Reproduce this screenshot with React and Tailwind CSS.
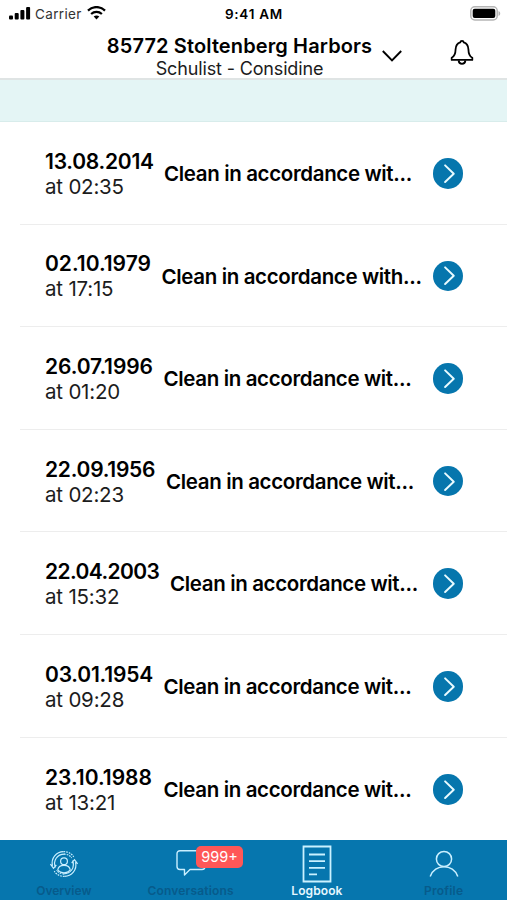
const entries = [
  { date: "13.08.2014", time: "at 02:35", title: "Clean in accordance wit...", col: "w-[119px]", dateTracking: "tracking-[-0.25px]" },
  { date: "02.10.1979", time: "at 17:15", title: "Clean in accordance with...", col: "w-[116.5px]", dateTracking: "tracking-[0px]" },
  { date: "26.07.1996", time: "at 01:20", title: "Clean in accordance wit...", col: "w-[118.5px]", dateTracking: "tracking-[-0.1px]" },
  { date: "22.09.1956", time: "at 02:23", title: "Clean in accordance wit...", col: "w-[121px]", dateTracking: "tracking-[-0.25px]" },
  { date: "22.04.2003", time: "at 15:32", title: "Clean in accordance wit...", col: "w-[125px]", dateTracking: "tracking-[-0.6px]" },
  { date: "03.01.1954", time: "at 09:28", title: "Clean in accordance wit...", col: "w-[118.5px]", dateTracking: "tracking-[-0.2px]" },
  { date: "23.10.1988", time: "at 13:21", title: "Clean in accordance wit...", col: "w-[118.5px]", dateTracking: "tracking-[0px]" },
];

function StatusBar() {
  return (
    <div className="grid h-[28px] grid-cols-3 items-center pl-[9px] pr-[6px]">
      <div className="flex items-center">
        <svg width="22" height="13" viewBox="0 0 22 13" className="-mt-px">
          <rect x="0" y="8.5" width="4" height="4" rx="1" />
          <rect x="5.7" y="6" width="4" height="6.5" rx="1" />
          <rect x="11.4" y="3" width="4" height="9.5" rx="1" />
          <rect x="17.1" y="0" width="4" height="12.5" rx="1" />
        </svg>
        <span className="ml-[4px] w-[47px] text-[13.5px] tracking-[0.35px] text-[#333]">Carrier</span>
        <svg width="19" height="14" viewBox="0 0 19 14" fill="none" stroke="#000" className="ml-[5px] -mt-[2px]">
          <path d="M1 4.6C5.8-.1 13.2-.1 18 4.6" strokeWidth="2.3" />
          <path d="M4.1 8C7.2 5.1 11.8 5.1 14.9 8" strokeWidth="2.2" />
          <path d="M6.7 10.6C8.3 9.2 10.7 9.2 12.3 10.6L9.5 13.5Z" fill="#000" stroke="none" />
        </svg>
      </div>
      <div className="whitespace-nowrap pr-[2px] text-center text-[13.5px] font-semibold tracking-[0.75px]">9:41 AM</div>
      <div className="-mt-[2px] flex justify-end">
        <svg width="31" height="15" viewBox="0 0 31 15">
          <rect x="0.8" y="0.8" width="26.4" height="13.2" rx="4" fill="#fff" stroke="#b5b5b5" strokeWidth="1.5" />
          <rect x="2.7" y="2.7" width="22.6" height="9.4" rx="2" />
          <path d="M28.5 5v5c2.3-.8 2.3-4.2 0-5Z" fill="#b5b5b5" />
        </svg>
      </div>
    </div>
  );
}

function Header() {
  return (
    <header className="flex h-[50px] items-start">
      <div className="ml-[106px] flex w-[267px] flex-col items-center whitespace-nowrap pt-[6px]">
        <div className="text-[20px] font-semibold leading-[24px] tracking-[0.12px]">85772 Stoltenberg Harbors</div>
        <div className="text-[18px] leading-[22px] tracking-[-0.15px] text-[#1c1c1c]">Schulist - Considine</div>
      </div>
      <svg width="22" height="14" viewBox="0 0 22 14" fill="none" stroke="#000" strokeWidth="1.9" className="ml-[8px] mt-[21px]">
        <path d="m1.8 2 9.2 9.3L20.2 2" />
      </svg>
      <svg width="26" height="28" viewBox="0 0 26 28" fill="none" stroke="#000" strokeWidth="1.8" strokeLinejoin="round" className="ml-[46px] mt-[11px]">
        <path d="M11.3 3.3C11.5 1.5 14.5 1.5 14.7 3.3C18 4.3 19.3 7 19.4 10.3C19.5 15 20.3 17.3 23.3 18.8V20.9H2.7V18.8C5.7 17.3 6.5 15 6.6 10.3C6.7 7 8 4.3 11.3 3.3Z" />
        <path d="M9.6 21.3C10 26 16 26 16.4 21.3" />
      </svg>
    </header>
  );
}

function Entry({ date, time, title, col, dateTracking }) {
  return (
    <li className="ml-[20px] flex h-[102.6px] items-center border-b border-[#ededed] pl-[25px] last:border-b-0">
      <div className={"shrink-0 whitespace-nowrap pt-[2px] leading-[25px] " + col}>
        <div className={"text-[21px] font-semibold " + dateTracking}>{date}</div>
        <div className="text-[20.5px] tracking-[-0.2px] text-[#1c1c1c]">{time}</div>
      </div>
      <div className="flex-1 whitespace-nowrap pt-[3px] text-[20.5px] font-semibold tracking-[-0.35px]">{title}</div>
      <div className="mr-[44px] mt-px flex size-[30.5px] shrink-0 items-center justify-center rounded-full bg-[#0676ad]">
        <svg width="31" height="31" viewBox="0 0 31 31" fill="none" stroke="#e9fbff" strokeWidth="2" strokeLinecap="round" strokeLinejoin="round">
          <path d="m12.3 7.2 8.8 8.5-8.8 8.4" />
        </svg>
      </div>
    </li>
  );
}

function OverviewIcon() {
  return (
    <svg width="30" height="28" viewBox="0 0 30 28" fill="none" stroke="#c9efff" strokeWidth="1.2">
      <circle cx="15" cy="11.2" r="3.4" />
      <path d="M8.7 20.2C9.5 13.7 20.5 13.7 21.3 20.2M8.7 20.2C12 23.6 18 23.6 21.3 20.2" />
      <path d="M6.4 17.5C3.8 10.5 8 4.3 15.5 4.2M3.5 15.8C1.6 8 7.5 1.8 14.5 1.7M1.4 14.2l3.1 4.1 2.8-3.3" />
      <path d="M23.6 10.5C26.2 17.5 22 23.7 14.5 23.8M26.5 12.2C28.4 20 22.5 26.2 15.5 26.3M28.6 13.8l-3.1-4.1-2.8 3.3" />
      <path d="M14.5 1.7C19 1.5 22.5 3.6 24.7 6.8M15.5 26.3C11 26.5 7.5 24.4 5.3 21.2M15 4.2C18 4 21 5.5 22.6 8M15 23.8C12 24 9.2 22.5 7.6 20.2" strokeDasharray="1.7 1" />
    </svg>
  );
}

function TabBar() {
  return (
    <nav className="grid h-[60px] shrink-0 grid-cols-4 bg-[#0676ae] text-center text-[12px] font-semibold text-[#075b8b]">
      <div className="flex flex-col items-center pl-px">
        <div className="flex h-[43px] items-center pt-[4px]"><OverviewIcon /></div>
        <span className="leading-[16px]">Overview</span>
      </div>
      <div className="relative flex flex-col items-center pl-px">
        <div className="flex h-[43px] items-center pt-[3px]">
          <svg width="30" height="28" viewBox="0 0 30 28" fill="none" stroke="#c9efff" strokeWidth="1.4" strokeLinejoin="round">
            <path d="M4 1.7H26a3 3 0 0 1 3 3V17.5a3 3 0 0 1-3 3H14L8.5 26V20.5H4a3 3 0 0 1-3-3V4.7a3 3 0 0 1 3-3Z" />
          </svg>
        </div>
        <span className="leading-[16px] tracking-[0.18px]">Conversations</span>
        <span className="absolute left-[69px] top-[6px] flex h-[22px] w-[47.5px] items-center justify-center rounded-[5px] bg-[#ff5757] text-[14.5px] font-normal text-white">999+</span>
      </div>
      <div className="flex flex-col items-center text-[#e5f7ff]">
        <div className="flex h-[43px] items-center pt-[4px]">
          <svg width="30" height="38" viewBox="0 0 30 38" fill="none" stroke="#c9f1ff" strokeWidth="1.8">
            <path d="M1.5 1.5H28.5V36.5H1.5ZM7 9.5H23M7 16.2H23M7 22.8H23M7 29.4H15" />
          </svg>
        </div>
        <span className="leading-[16px] tracking-[0.1px]">Logbook</span>
      </div>
      <div className="flex flex-col items-center">
        <div className="flex h-[43px] items-center pt-[4px]">
          <svg width="30" height="28" viewBox="0 0 30 28" fill="none" stroke="#c9efff" strokeWidth="1.5">
            <circle cx="15" cy="9" r="7.6" />
            <path d="M1.2 26.5C5.5 13.4 24.5 13.4 28.8 26.5" />
          </svg>
        </div>
        <span className="leading-[16px] tracking-[0.25px]">Profile</span>
      </div>
    </nav>
  );
}

export default function App() {
  return (
    <div className="flex h-[900px] w-[507px] flex-col overflow-hidden bg-white font-['Inter','Liberation_Sans',sans-serif] text-black">
      <StatusBar />
      <Header />
      <div className="h-[44px] shrink-0 border-b border-t-2 border-b-[#d8eceb] border-t-[#dfe4e4] bg-[#e4f5f5]" />
      <ul className="min-h-0 flex-1 overflow-hidden">
        {entries.map((entry) => (
          <Entry key={entry.date} {...entry} />
        ))}
      </ul>
      <TabBar />
    </div>
  );
}
